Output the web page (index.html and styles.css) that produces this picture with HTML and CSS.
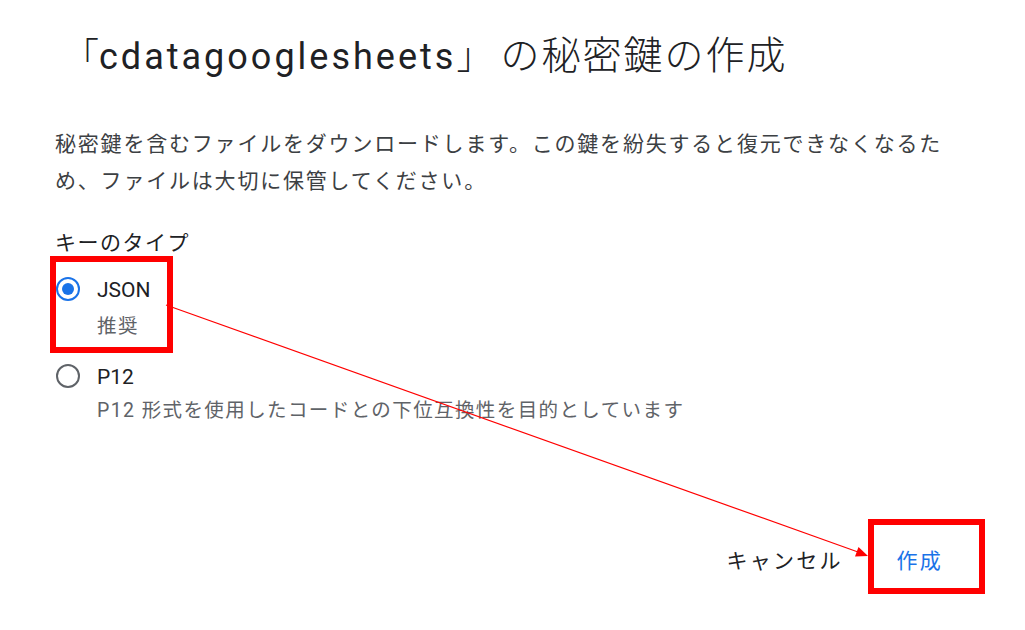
FILE: index.html
```html
<!DOCTYPE html>
<html lang="ja">
<head>
<meta charset="utf-8">
<link rel="stylesheet" href="styles.css">
</head>
<body>
<div class="dialog">
  <h1 class="title">「<span class="latin">cdatagooglesheets</span>」<span class="cjk">の秘密鍵の作成</span></h1>
  <p class="desc">秘密鍵を含むファイルをダウンロードします。この鍵を紛失すると復元できなくなるため、ファイルは大切に保管してください。</p>
  <div class="label">キーのタイプ</div>
  <div class="options">
    <div class="option">
      <div class="row"><span class="radio checked"></span><span class="opt-name">JSON</span></div>
      <div class="sub sub-json">推奨</div>
    </div>
    <div class="option">
      <div class="row row-p12"><span class="radio"></span><span class="opt-name">P12</span></div>
      <div class="sub sub-p12">P12 形式を使用したコードとの下位互換性を目的としています</div>
    </div>
  </div>
  <div class="actions">
    <button class="btn cancel">キャンセル</button>
    <button class="btn create">作成</button>
  </div>
</div>
<svg class="annot" width="1025" height="630" viewBox="0 0 1025 630">
  <rect x="53" y="259" width="117" height="91" fill="none" stroke="#ff0000" stroke-width="6"/>
  <rect x="871" y="522" width="111" height="69" fill="none" stroke="#ff0000" stroke-width="6"/>
  <line x1="166" y1="305" x2="858" y2="552" stroke="#ff0000" stroke-width="1.2"/>
  <polygon points="868,556 855,556.5 858.5,547" fill="#ff0000"/>
</svg>
</body>
</html>
```
FILE: styles.css
```css
html, body {
  margin: 0;
  padding: 0;
  background: #ffffff;
}
body {
  width: 1025px;
  height: 630px;
  overflow: hidden;
  position: relative;
  font-family: Roboto, "Noto Sans CJK JP", sans-serif;
  color: #202124;
}
.dialog {
  padding: 28px 0 0 55px;
}
.title {
  margin: 0 0 0 8px;
  font-weight: 300;
  font-size: 36px;
  line-height: 48px;
  height: 52px;
  white-space: nowrap;
  color: #202124;
  font-family: "Noto Sans CJK JP", sans-serif;
}
.title .latin {
  font-family: Roboto, sans-serif;
  font-weight: 400;
  font-size: 36px;
  letter-spacing: 3px;
}
.title .cjk {
  margin-left: 8px;
  font-size: 39px;
  letter-spacing: 2px;
}
.desc {
  margin: 44px 0 0 0;
  width: 898px;
  font-size: 21px;
  letter-spacing: 1.8px;
  line-height: 37px;
  color: #3c4043;
  font-family: "Noto Sans CJK JP", sans-serif;
}
.label {
  margin-top: 28px;
  font-size: 21px;
  letter-spacing: 1.5px;
  line-height: 30px;
  color: #202124;
  font-family: "Noto Sans CJK JP", sans-serif;
}
.options {
  margin-top: 18px;
  display: flex;
  flex-direction: column;
}
.row {
  display: flex;
  align-items: center;
  height: 30px;
}
.row-p12 {
  margin-top: 19px;
}
.radio {
  box-sizing: border-box;
  width: 24px;
  height: 24px;
  margin-left: 1px;
  margin-right: 17px;
  border-radius: 50%;
  border: 2.5px solid #5f6368;
  display: flex;
  align-items: center;
  justify-content: center;
}
.radio.checked {
  border-color: #1a73e8;
}
.radio.checked::after {
  content: "";
  width: 12px;
  height: 12px;
  border-radius: 50%;
  background: #1a73e8;
}
.opt-name {
  font-family: Roboto, sans-serif;
  font-size: 21px;
  color: #202124;
  line-height: 30px;
  padding-top: 2px;
}
.sub {
  padding-left: 42px;
  font-size: 19.5px;
  letter-spacing: 1.4px;
  line-height: 30px;
  color: #5f6368;
  font-family: Roboto, "Noto Sans CJK JP", sans-serif;
}
.sub-json {
  margin-top: 8px;
}
.sub-p12 {
  margin-top: 5px;
}
.actions {
  margin-top: 118px;
  display: flex;
  justify-content: flex-end;
  gap: 54px;
  padding-right: 82px;
}
.btn {
  border: none;
  background: none;
  padding: 0;
  margin: 0;
  font-family: "Noto Sans CJK JP", sans-serif;
  font-size: 21px;
  letter-spacing: 2.2px;
  line-height: 30px;
}
.cancel {
  color: #202124;
}
.create {
  color: #1a73e8;
}
.annot {
  position: absolute;
  left: 0;
  top: 0;
  pointer-events: none;
}
```
